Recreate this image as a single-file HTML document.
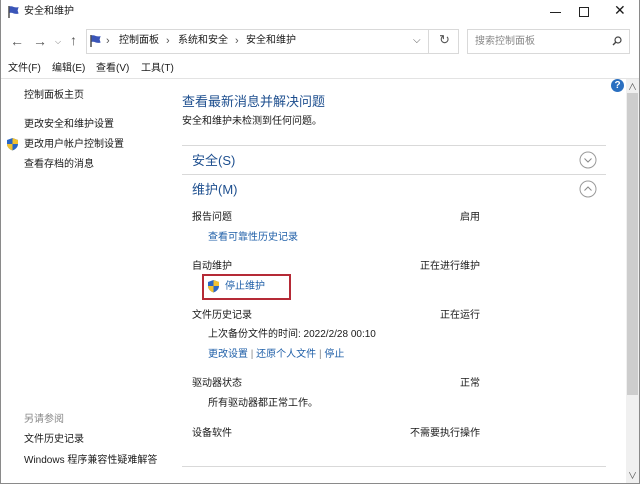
<!DOCTYPE html>
<html><head><meta charset="utf-8">
<style>
*{margin:0;padding:0;box-sizing:border-box}
body{width:640px;height:484px;background:#fff;position:relative;overflow:hidden;font-family:"Liberation Sans","Noto Sans CJK SC",sans-serif;font-size:10px;color:#1a1a1a}
.a{position:absolute;white-space:nowrap;line-height:14px}
.l{color:#1f5fa8}
.h{color:#1e4f8f}
.r{text-align:right}
.line{position:absolute;height:1px;background:#d9d9d9}
</style></head><body>
<div style="position:absolute;left:0;top:0;width:640px;height:484px;border:1px solid #8a8a8a;border-top:none"></div>
<!-- title -->
<svg class="a" style="left:7px;top:5px" width="14" height="14" viewBox="0 0 14 14"><path d="M2 1v12" stroke="#333" stroke-width="1.3"/><path d="M2.6 1.5c3-1 5 2 9 .5l-1 3.5 1 3c-4 1.5-6-1.5-9-.5z" fill="#3a55b8"/></svg>
<div class="a" style="left:24px;top:5px">安全和维护</div>
<div style="position:absolute;left:550px;top:12px;width:11px;height:1px;background:#222"></div>
<div style="position:absolute;left:579px;top:7px;width:10px;height:10px;border:1px solid #222"></div>
<div class="a" style="left:614px;top:3px;font-size:14px">✕</div>
<!-- nav -->
<div class="a" style="left:10px;top:34px;font-size:14px;color:#555">←</div>
<div class="a" style="left:33px;top:34px;font-size:14px;color:#555">→</div>
<div class="a" style="left:55px;top:35px;font-size:8px;color:#777">⌵</div>
<div class="a" style="left:70px;top:33px;font-size:14px;color:#555">↑</div>
<div style="position:absolute;left:86px;top:29px;width:373px;height:25px;border:1px solid #d9d9d9"></div>
<div style="position:absolute;left:428px;top:29px;width:1px;height:25px;background:#d9d9d9"></div>
<svg class="a" style="left:89px;top:34px" width="14" height="14" viewBox="0 0 14 14"><path d="M2 1v12" stroke="#333" stroke-width="1.3"/><path d="M2.6 1.5c3-1 5 2 9 .5l-1 3.5 1 3c-4 1.5-6-1.5-9-.5z" fill="#3a55b8"/></svg>
<div class="a" style="left:106px;top:34px;font-size:11px;color:#555">›</div>
<div class="a" style="left:119px;top:34px">控制面板</div>
<div class="a" style="left:166px;top:34px;font-size:11px;color:#555">›</div>
<div class="a" style="left:178px;top:34px">系统和安全</div>
<div class="a" style="left:235px;top:34px;font-size:11px;color:#555">›</div>
<div class="a" style="left:246px;top:34px">安全和维护</div>
<div class="a" style="left:413px;top:34px;font-size:10px;color:#555">⌵</div>
<div class="a" style="left:439px;top:33px;font-size:13px;color:#555">↻</div>
<div style="position:absolute;left:467px;top:29px;width:163px;height:25px;border:1px solid #d9d9d9"></div>
<div class="a" style="left:475px;top:35px;color:#888">搜索控制面板</div>
<svg class="a" style="left:612px;top:36px" width="10" height="10"><circle cx="6" cy="4" r="3" fill="none" stroke="#444" stroke-width="1.2"/><path d="M4 6L1 9" stroke="#444" stroke-width="1.4"/></svg>
<!-- menu -->
<div class="a" style="left:8px;top:62px">文件(F)</div>
<div class="a" style="left:52px;top:62px">编辑(E)</div>
<div class="a" style="left:96px;top:62px">查看(V)</div>
<div class="a" style="left:141px;top:62px">工具(T)</div>
<div class="line" style="left:1px;top:78px;width:638px;background:#e3e3e3"></div>
<!-- scrollbar -->
<div style="position:absolute;left:626px;top:79px;width:13px;height:404px;background:#f0f0f0"></div>
<div style="position:absolute;left:627px;top:93px;width:11px;height:302px;background:#cdcdcd"></div>
<div class="a" style="left:628px;top:80px;font-size:9px;color:#555">∧</div>
<div class="a" style="left:628px;top:469px;font-size:9px;color:#555">∨</div>
<div style="position:absolute;left:611px;top:79px;width:13px;height:13px;border-radius:50%;background:#2a6fc0;color:#fff;font-size:10px;font-weight:bold;text-align:center;line-height:13px">?</div>
<!-- left pane -->
<div class="a" style="left:24px;top:89px">控制面板主页</div>
<div class="a" style="left:24px;top:118px">更改安全和维护设置</div>
<svg class="a" style="left:6px;top:137px" width="13" height="14" viewBox="0 0 13 14"><path d="M6.5 1L12 3v4c0 3-2.5 5.5-5.5 6.5C3.5 12.5 1 10 1 7V3z" fill="#2a66c4"/><path d="M6.5 1L12 3v4H6.5zM6.5 7v6.5C3.5 12.5 1 10 1 7z" fill="#f2c230"/></svg>
<div class="a" style="left:24px;top:138px">更改用户帐户控制设置</div>
<div class="a" style="left:24px;top:158px">查看存档的消息</div>
<div class="a" style="left:24px;top:413px;color:#888">另请参阅</div>
<div class="a" style="left:24px;top:433px">文件历史记录</div>
<div class="a" style="left:24px;top:454px">Windows 程序兼容性疑难解答</div>
<!-- main -->
<div class="a h" style="left:182px;top:93px;font-size:13px;line-height:17px">查看最新消息并解决问题</div>
<div class="a" style="left:182px;top:115px">安全和维护未检测到任何问题。</div>
<div class="line" style="left:182px;top:145px;width:424px"></div>
<div class="a h" style="left:192px;top:152px;font-size:13px;line-height:17px">安全(S)</div>
<svg class="a" style="left:579px;top:151px" width="18" height="18"><circle cx="9" cy="9" r="8" fill="none" stroke="#9a9a9a"/><path d="M5.5 7.5L9 11l3.5-3.5" fill="none" stroke="#888"/></svg>
<div class="line" style="left:182px;top:174px;width:424px"></div>
<div class="a h" style="left:192px;top:181px;font-size:13px;line-height:17px">维护(M)</div>
<svg class="a" style="left:579px;top:180px" width="18" height="18"><circle cx="9" cy="9" r="8" fill="none" stroke="#9a9a9a"/><path d="M5.5 10.5L9 7l3.5 3.5" fill="none" stroke="#888"/></svg>
<div class="a" style="left:192px;top:211px">报告问题</div>
<div class="a r" style="left:380px;width:100px;top:211px">启用</div>
<div class="a l" style="left:208px;top:231px">查看可靠性历史记录</div>
<div class="a" style="left:192px;top:260px">自动维护</div>
<div class="a r" style="left:380px;width:100px;top:260px">正在进行维护</div>
<div style="position:absolute;left:202px;top:274px;width:89px;height:26px;border:2px solid #b52a36"></div>
<svg class="a" style="left:207px;top:279px" width="13" height="14" viewBox="0 0 13 14"><path d="M6.5 1L12 3v4c0 3-2.5 5.5-5.5 6.5C3.5 12.5 1 10 1 7V3z" fill="#2a66c4"/><path d="M6.5 1L12 3v4H6.5zM6.5 7v6.5C3.5 12.5 1 10 1 7z" fill="#f2c230"/></svg>
<div class="a l" style="left:225px;top:280px">停止维护</div>
<div class="a" style="left:192px;top:309px">文件历史记录</div>
<div class="a r" style="left:380px;width:100px;top:309px">正在运行</div>
<div class="a" style="left:208px;top:328px">上次备份文件的时间: 2022/2/28 00:10</div>
<div class="a" style="left:208px;top:348px"><span class="l">更改设置</span> <span style="color:#888">|</span> <span class="l">还原个人文件</span> <span style="color:#888">|</span> <span class="l">停止</span></div>
<div class="a" style="left:192px;top:377px">驱动器状态</div>
<div class="a r" style="left:380px;width:100px;top:377px">正常</div>
<div class="a" style="left:208px;top:397px">所有驱动器都正常工作。</div>
<div class="a" style="left:192px;top:427px">设备软件</div>
<div class="a r" style="left:380px;width:100px;top:427px">不需要执行操作</div>
<div class="line" style="left:182px;top:466px;width:424px"></div>
</body></html>
